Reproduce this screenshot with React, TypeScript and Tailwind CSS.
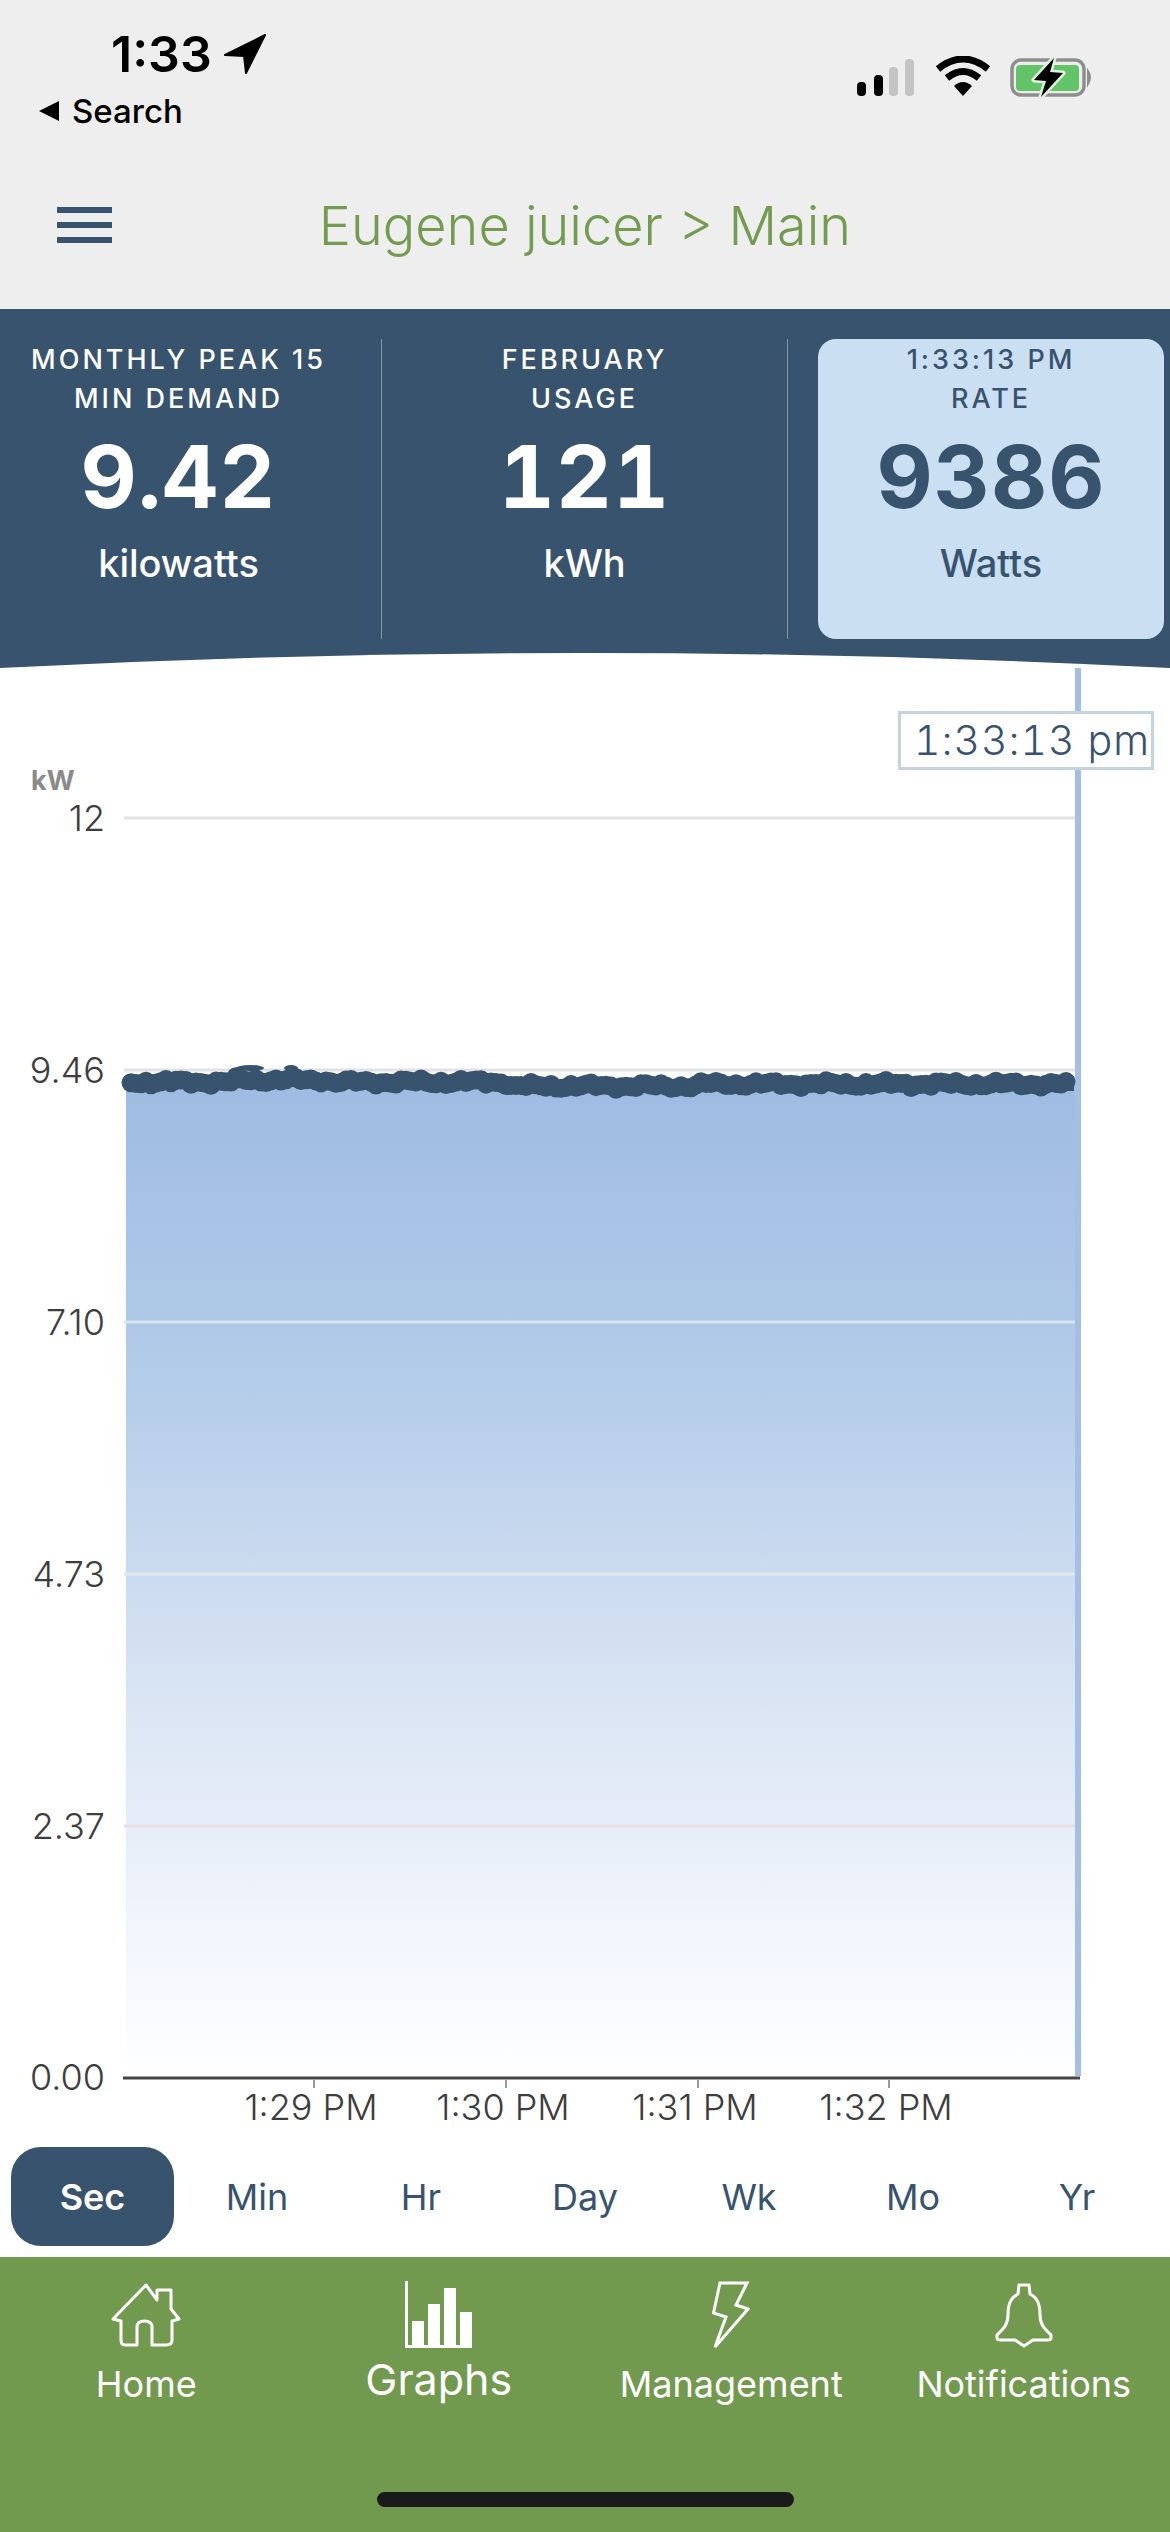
import React from "react";

const tabs = ["Sec", "Min", "Hr", "Day", "Wk", "Mo", "Yr"];
const yLabels = [
  { label: "12", y: 818, line: "#e2e2e2" },
  { label: "9.46", y: 1070, line: "#e2e2e2" },
  { label: "7.10", y: 1322, line: "#dbe3ee" },
  { label: "4.73", y: 1574, line: "#e4e8ee" },
  { label: "2.37", y: 1826, line: "#eadfe6" },
];
const xTicks = [
  { label: "1:29 PM", x: 311 },
  { label: "1:30 PM", x: 503 },
  { label: "1:31 PM", x: 695 },
  { label: "1:32 PM", x: 886 },
];

// rough shape of the reading, then a little noise so the line looks bumpy
const baseY = (x: number) => {
  if (x < 235) return 1082;
  if (x < 330) return 1080;
  if (x < 510) return 1082;
  if (x < 700) return 1086;
  return 1084;
};
const dots = Array.from({ length: 188 }, (_, i) => {
  const x = 131 + i * 5;
  const noise = Math.sin(i * 1.7) * 1.5 + Math.sin(i * 0.53) * 1.5 + Math.cos(i * 3.1) * 0.8;
  return { x, y: baseY(x) + noise };
});

function Stat({ top, bottom, value, unit, light }: { top: string; bottom: string; value: string; unit: string; light?: boolean }) {
  return (
    <div className={`flex flex-col items-center h-[300px] pt-[1px] ${light ? "text-[#38536d]" : "text-white"}`}>
      <div className="text-[27px] leading-[39px] font-medium tracking-[3px] whitespace-nowrap">{top}</div>
      <div className="text-[27px] leading-[39px] font-medium tracking-[3px] whitespace-nowrap">{bottom}</div>
      <div className="text-[87px] leading-[104px] font-bold tracking-[1px] tabular-nums mt-[7px]">{value}</div>
      <div className="text-[38px] leading-[44px] font-medium mt-[12px]">{unit}</div>
    </div>
  );
}

function StatusBar() {
  return (
    <div className="flex justify-between h-[130px]">
      <div className="flex flex-col pl-[38px] pt-[30px]">
        <div className="flex items-center gap-[12px] pl-[73px] h-[48px]">
          <span className="text-[50px] leading-[48px] font-semibold text-black">1:33</span>
          <svg width="42" height="40" viewBox="0 0 42 40">
            <path d="M41 1 L1 21 L20 22 L22 39 Z" fill="#000" stroke="#000" strokeWidth="2" strokeLinejoin="round" />
          </svg>
        </div>
        <div className="flex items-center gap-[12px] mt-[15px]">
          <svg width="22" height="22" viewBox="0 0 22 22">
            <path d="M21 1 L1 11 L21 21 Z" fill="#000" />
          </svg>
          <span className="text-[33px] leading-[36px] font-medium text-black">Search</span>
        </div>
      </div>
      <div className="flex items-start pt-[56px] pr-[78px]">
        <svg width="236" height="44" viewBox="855 56 236 44">
          <rect x="856" y="82" width="9" height="14" rx="4" fill="#000" />
          <rect x="873" y="75" width="9" height="21" rx="4" fill="#000" />
          <rect x="888" y="67" width="9" height="29" rx="4" fill="#c4c4c4" />
          <rect x="904" y="59" width="9" height="37" rx="4" fill="#c4c4c4" />
          <path d="M937 69 Q962 49 987 69" fill="none" stroke="#000" strokeWidth="7" />
          <path d="M946 78 Q962 65 978 78" fill="none" stroke="#000" strokeWidth="7" />
          <path d="M953 86 Q962 78 971 86 L962 96 Z" fill="#000" />
          <rect x="1011" y="60" width="72" height="35" rx="9" fill="none" stroke="#8e8e8e" strokeWidth="3.5" />
          <rect x="1015" y="65" width="63" height="26" rx="4" fill="#62c466" />
          <path d="M1087 71 Q1091 77 1087 84 Z" fill="#8e8e8e" stroke="#8e8e8e" strokeWidth="2" />
          <path d="M1053 58 L1033 80 L1045 81 L1040 97 L1062 73 L1049 72 Z" fill="#000" stroke="#dff2df" strokeWidth="5" paintOrder="stroke" strokeLinejoin="round" />
        </svg>
      </div>
    </div>
  );
}

function TopBar() {
  return (
    <div className="relative flex items-center justify-center h-[179px] pt-[13px]">
      <div className="absolute left-[57px] top-[77px] flex flex-col gap-[9px]">
        <div className="w-[55px] h-[6px] bg-[#38536d]" />
        <div className="w-[55px] h-[6px] bg-[#38536d]" />
        <div className="w-[55px] h-[6px] bg-[#38536d]" />
      </div>
      <span className="text-[54px] leading-[60px] font-light text-[#739c50]">Eugene juicer &gt; Main</span>
    </div>
  );
}

function Chart() {
  return (
    <div className="relative h-[1467px] bg-white">
      <svg className="block" width="1170" height="1467" viewBox="0 668 1170 1467">
        <defs>
          <linearGradient id="fill" x1="0" y1="0" x2="0" y2="1">
            <stop offset="0" stopColor="#9ebbe2" />
            <stop offset="0.3" stopColor="#b3cce9" />
            <stop offset="0.6" stopColor="#d8e3f3" />
            <stop offset="0.85" stopColor="#f1f5fc" />
            <stop offset="1" stopColor="#ffffff" />
          </linearGradient>
        </defs>
        <rect x="126" y="1080" width="950" height="997" fill="url(#fill)" />
        {yLabels.map((l) => (
          <g key={l.label}>
            <line x1="124" x2="1076" y1={l.y} y2={l.y} stroke={l.line} strokeWidth="3" />
            <text x="105" y={l.y + 13} textAnchor="end" fontSize="36" fontWeight="300" fill="#3d3d3d">
              {l.label}
            </text>
          </g>
        ))}
        <text x="31" y="790" fontSize="27" fontWeight="700" fill="#8a8a8a">
          kW
        </text>
        <text x="105" y="2090" textAnchor="end" fontSize="36" fontWeight="300" fill="#3d3d3d">
          0.00
        </text>
        <rect x="1075" y="668" width="6" height="1408" fill="#a3bfe4" />
        {dots.map((d) => (
          <circle key={d.x} cx={d.x} cy={d.y} r="9.5" fill="#38536d" />
        ))}
        <rect x="1060" y="1076" width="14" height="15" fill="#38536d" />
        <ellipse cx="250" cy="1068" rx="14" ry="3" fill="#38536d" />
        <ellipse cx="291" cy="1068" rx="7" ry="3" fill="#38536d" />
        <line x1="123" x2="1080" y1="2078" y2="2078" stroke="#444444" strokeWidth="3" />
        {xTicks.map((t) => (
          <g key={t.label}>
            <line x1={t.x + 3} x2={t.x + 3} y1="2080" y2="2088" stroke="#9a9a9a" strokeWidth="2" />
            <text x={t.x} y="2120" textAnchor="middle" fontSize="36" fontWeight="300" fill="#3d3d3d">
              {t.label}
            </text>
          </g>
        ))}
      </svg>
      <div className="absolute left-[898px] top-[43px] w-[256px] h-[59px] flex items-center justify-end pr-[1px] bg-white border-[3px] border-[#c3d4dd] text-[41px] font-light tracking-[1px] tabular-nums text-[#38536d] whitespace-nowrap">
        1:33:13 pm
      </div>
    </div>
  );
}

function Home() {
  return (
    <svg width="70" height="64" viewBox="0 0 70 64" fill="none" stroke="#fff" strokeWidth="3" strokeLinejoin="round">
      <path d="M35 2 L46 17 L46 7 L60 7 L60 26 L68 36 L61 38 L61 57 Q61 62 55 62 L41 62 L41 44 Q41 38 33.5 38 Q26 38 26 44 L26 62 L14 62 Q10 62 10 57 L10 38 L2 36 Z" />
    </svg>
  );
}

function Graphs() {
  return (
    <svg width="68" height="68" viewBox="405 2281 68 68" fill="#fff">
      <rect x="405" y="2281" width="3" height="67" />
      <rect x="405" y="2345" width="67" height="3" />
      <rect x="412" y="2321" width="12" height="27" />
      <rect x="428" y="2304" width="12" height="44" />
      <rect x="444" y="2288" width="12" height="60" />
      <rect x="460" y="2312" width="12" height="36" />
    </svg>
  );
}

function Bolt() {
  return (
    <svg width="38" height="68" viewBox="0 0 38 68" fill="none" stroke="#fff" strokeWidth="3" strokeLinejoin="miter">
      <path d="M8 2 L35 2 L24 24 L36 28 L3 66 L14 36 L1.500 32 Z" />
    </svg>
  );
}

function Bell() {
  return (
    <svg width="58" height="65" viewBox="0 0 58 65" fill="none" stroke="#fff" strokeWidth="3" strokeLinejoin="round">
      <path d="M24 2 L34 2 L35 11 C43 15 45 22 45 32 C45 42 50 46 56 52 L56 55 Q56 57 52 57 L38 57 L29 63 L20 57 L6 57 Q2 57 2 55 L2 52 C8 46 13 42 13 32 C13 22 15 15 23 11 Z" />
    </svg>
  );
}

function NavItem({ label, icon, big }: { label: string; icon: React.ReactNode; big?: boolean }) {
  return (
    <div className="flex flex-col items-center">
      <div className="h-[68px] flex items-center justify-center">{icon}</div>
      <span className={big ? "text-[43px] leading-[48px] text-white mt-[6px]" : "text-[36px] leading-[44px] text-white mt-[13px]"}>{label}</span>
    </div>
  );
}

export default function App() {
  return (
    <div className="w-[1170px] h-[2532px] flex flex-col overflow-hidden bg-white [font-family:Inter,sans-serif]">
      <div className="bg-[#eeeeee]">
        <StatusBar />
        <TopBar />
      </div>

      <div className="bg-[#38536d] h-[359px] flex flex-col justify-between">
        <div className="flex pt-[30px] pr-[4px]">
          <div className="w-[382px] border-r border-[#8296a8] pr-[24px]">
            <Stat top="MONTHLY PEAK 15" bottom="MIN DEMAND" value="9.42" unit="kilowatts" />
          </div>
          <div className="w-[406px] border-r border-[#8296a8]">
            <Stat top="FEBRUARY" bottom="USAGE" value="121" unit="kWh" />
          </div>
          <div className="ml-[30px] w-[346px] bg-[#cbdff3] rounded-[18px]">
            <Stat top="1:33:13 PM" bottom="RATE" value="9386" unit="Watts" light />
          </div>
        </div>
        <svg className="block" width="1170" height="15" viewBox="0 0 1170 15">
          <path d="M0 15 Q585 -15 1170 15 Z" fill="#fff" />
        </svg>
      </div>

      <Chart />

      <div className="grid grid-cols-7 px-[11px] items-center h-[122px] pt-[1px] bg-white">
        {tabs.map((t) =>
          t === "Sec" ? (
            <div key={t} className="h-[99px] w-[163px] flex items-center justify-center rounded-[30px] bg-[#38536d] text-white text-[36px] font-semibold">
              {t}
            </div>
          ) : (
            <div key={t} className="text-center text-[36px] text-[#38536d]">
              {t}
            </div>
          )
        )}
      </div>

      <div className="flex-1 bg-[#729a4f] flex flex-col">
        <div className="grid grid-cols-4 pt-[24px]">
          <NavItem label="Home" icon={<Home />} />
          <NavItem label="Graphs" icon={<Graphs />} big />
          <NavItem label="Management" icon={<Bolt />} />
          <NavItem label="Notifications" icon={<Bell />} />
        </div>
        <div className="mt-[86px] mx-auto w-[417px] h-[15px] rounded-full bg-[#1a1a1a]" />
      </div>
    </div>
  );
}
